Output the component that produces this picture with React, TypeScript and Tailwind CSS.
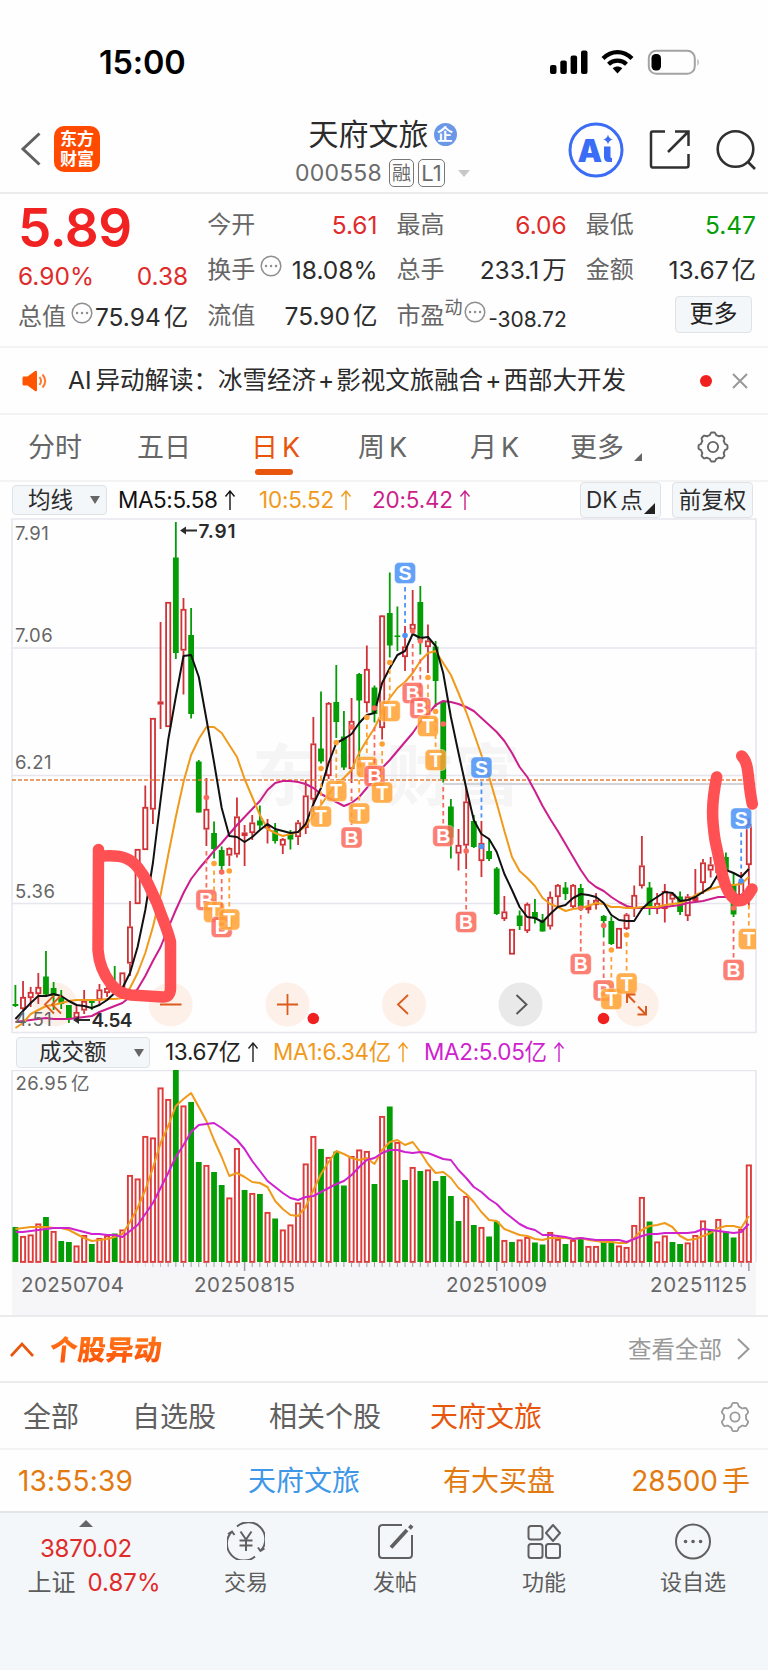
import type { ReactNode } from 'react';

// [rising, high, low, bodyTop, bodyBottom]
const candles: [number, number, number, number, number][] = [
  [0, 985, 1007, 1004, 1006], [1, 981, 1010, 997, 1009], [1, 987, 1007, 992, 998], [1, 973, 1004, 987, 994],
  [0, 951, 997, 976.5, 994.5], [0, 982, 1010, 988, 996], [0, 990, 1009, 998, 1004], [0, 1005, 1023, 1005, 1018],
  [1, 1006, 1018.5, 1012, 1018], [1, 990, 1014, 1001, 1010.5], [0, 999, 1010, 1001, 1003], [1, 984, 1006, 989.5, 1000],
  [1, 980, 997, 988, 993], [0, 966, 993, 983, 988], [1, 972.5, 993, 972.5, 988.5], [1, 901, 976, 926.5, 963.5],
  [1, 849, 904, 849, 904], [1, 785.5, 850, 807, 850], [1, 718, 824, 718, 809.5], [1, 622, 729, 701.5, 704.5],
  [1, 602, 727, 602, 727], [0, 522, 659, 557.5, 653], [1, 598, 694.5, 609, 650.5], [0, 608, 718.5, 635, 714],
  [0, 760, 812.5, 761.5, 812.5], [1, 778, 846, 809, 829.5], [0, 821.5, 858.5, 833, 849], [0, 846.5, 870, 850, 866],
  [1, 847.5, 866, 848, 855.5], [1, 797.5, 857.5, 816.5, 854.5], [1, 825, 866, 832.5, 836], [1, 815, 840, 822.5, 833],
  [0, 805.5, 830, 820.5, 825.5], [1, 819, 843.5, 825.5, 828.5], [0, 823, 843.5, 830.5, 841], [1, 838, 854, 839, 845.5],
  [0, 830, 849.5, 834, 839.5], [1, 820, 845, 822.5, 837], [1, 780, 834, 795.5, 828], [1, 717, 812, 743.5, 799.5],
  [0, 691.5, 763.5, 748.5, 761.5], [1, 702, 779, 703, 776], [0, 665, 738, 702, 722], [0, 711, 770, 736.5, 767.5],
  [1, 698, 783, 721, 769], [0, 673, 760, 674, 700.5], [1, 645.5, 712.5, 669, 703], [0, 685.5, 722.5, 687.5, 714],
  [1, 615, 739.5, 615.5, 728], [0, 572.5, 657.5, 613, 645.5], [0, 606.5, 651, 635.5, 637], [1, 626, 671, 646.5, 657],
  [1, 590, 635, 624, 629.5], [0, 586, 654.5, 602, 640], [1, 624.5, 673, 640.5, 647], [0, 641, 707, 646.5, 681],
  [0, 701.5, 782.5, 702, 779], [0, 799, 858.5, 806.5, 837.5], [1, 829, 870.5, 845, 853.5], [1, 787, 869, 801.5, 845.5],
  [0, 815, 848, 821, 847], [1, 821, 877, 843, 861], [0, 839, 861, 851, 859], [0, 867, 915, 868.5, 914],
  [1, 896, 921, 911.5, 919], [1, 929, 954.5, 929, 954.5], [0, 910.5, 930, 915.5, 926], [1, 902.5, 933, 904, 931],
  [0, 899, 923.5, 912, 918], [0, 914, 931.5, 920.5, 931.5], [1, 891.5, 929.5, 897, 926.5], [1, 884, 907.5, 885, 897],
  [0, 882, 900, 887.5, 894], [1, 884, 908.5, 885, 907], [0, 884, 911, 888, 908], [1, 900, 913.5, 906, 910],
  [1, 893, 909.5, 900, 905], [0, 915, 937.5, 916, 921], [0, 916.5, 945, 921, 944], [1, 928, 948.5, 928, 948.5],
  [1, 913, 930, 914.5, 929], [1, 885.5, 917, 895, 909], [1, 836, 888.5, 865.5, 886], [0, 882, 915, 887.5, 907],
  [1, 893, 914, 903, 909], [1, 884, 922.5, 891, 909], [1, 892, 903.5, 894, 899.5], [0, 891.5, 915, 896.5, 912],
  [1, 894, 921, 896.5, 916], [1, 869, 902, 897, 901], [1, 859, 894, 862.5, 883], [1, 857, 877.5, 864.5, 870.5],
  [1, 862, 880, 868, 873], [0, 852.5, 880, 857, 872], [0, 873, 917, 885, 914.5], [1, 872, 897, 882, 896],
  [1, 818, 907, 824, 865],
];

const ma5 = [1019, 1011, 1003, 996, 996, 994, 996, 1001, 1005, 1006, 1008, 1005, 1000, 993, 988, 973, 947, 910, 863, 800, 740, 697, 656, 655, 677, 719, 762, 808, 836, 837, 842, 837, 830, 824, 829, 831, 833, 832, 824, 804, 788, 763, 743, 739, 734, 723, 715, 713, 683, 668, 655, 651, 634, 638, 637, 646, 673, 717, 753, 788, 820, 834, 839, 852, 874, 890, 907, 917, 918, 922, 914, 907, 905, 898, 894, 895, 897, 903, 915, 920, 921, 921, 909, 902, 897, 892, 893, 901, 900, 897, 892, 887, 874, 870, 873, 877, 869];
const ma10 = [1028, 1023, 1014, 1010, 1006, 1005, 1003, 1001, 1000, 1000, 1000, 1000, 999, 999, 998, 988, 973, 953, 927, 895, 855, 817, 782, 755, 739, 727, 727, 733, 745, 757, 779, 797, 815, 829, 833, 836, 834, 832, 826, 815, 805, 794, 784, 778, 770, 753, 740, 728, 712, 698, 688, 682, 673, 661, 653, 651, 663, 675, 693, 712, 733, 755, 777, 803, 831, 857, 871, 878, 886, 898, 904, 907, 911, 909, 908, 906, 903, 904, 907, 907, 908, 908, 907, 907, 907, 905, 904, 903, 900, 895, 892, 889, 887, 885, 885, 884, 877];
const ma20 = [1022, 1021, 1020, 1019, 1018, 1019, 1019, 1019, 1018, 1017, 1016, 1012, 1009, 1006, 1003, 997, 989, 976, 961, 947, 928, 910, 893, 879, 869, 860, 851, 843, 834, 825, 817, 809, 801, 790, 783, 781, 781, 782, 784, 788, 794, 798, 802, 806, 803, 797, 788, 778, 768, 760, 751, 742, 733, 722, 714, 705, 701, 702, 704, 707, 711, 718, 725, 732, 741, 753, 767, 777, 791, 806, 819, 831, 844, 857, 870, 881, 887, 891, 897, 902, 906, 908, 908, 908, 908, 907, 906, 905, 903, 902, 901, 899, 897, 897, 896, 895, 889];

// [rising, top]
const volumes: [number, number][] = [
  [0, 1227], [1, 1236], [1, 1234.5], [1, 1223.5], [0, 1217], [1, 1231], [0, 1241], [0, 1242], [1, 1245.5], [1, 1235],
  [0, 1244], [1, 1238], [1, 1235.5], [0, 1233.5], [1, 1229.5], [1, 1175], [1, 1178.5], [1, 1136], [1, 1137.5], [1, 1087.5],
  [1, 1099], [0, 1070], [1, 1105.5], [0, 1102], [0, 1162], [1, 1165], [0, 1172], [0, 1185], [1, 1197.5], [1, 1148],
  [0, 1190], [1, 1193], [0, 1194], [1, 1212], [0, 1218.5], [1, 1229.5], [1, 1224.5], [1, 1202.5], [1, 1163.5], [1, 1136],
  [0, 1149], [1, 1157], [0, 1151.5], [0, 1185.5], [1, 1156], [1, 1149.5], [1, 1151], [0, 1184], [1, 1116], [0, 1106.5],
  [1, 1142], [0, 1180], [1, 1167], [0, 1171], [1, 1169.5], [0, 1181], [0, 1176], [0, 1196], [0, 1221], [1, 1196],
  [0, 1225], [1, 1227], [0, 1236.5], [0, 1221.5], [1, 1240], [0, 1242], [1, 1239.5], [1, 1237], [0, 1242.5], [0, 1244.5],
  [1, 1232], [1, 1239], [0, 1244], [1, 1240], [0, 1237.5], [1, 1246], [1, 1246], [0, 1241.5], [0, 1241.5], [1, 1245.5],
  [1, 1247], [1, 1225], [1, 1197], [0, 1221.5], [1, 1241.5], [1, 1235.5], [0, 1242], [0, 1244], [1, 1242.5], [1, 1235],
  [1, 1220.5], [0, 1229.5], [1, 1219], [0, 1231.5], [0, 1237.5], [1, 1229], [1, 1164.5],
];
const volMa1 = [1229, 1228, 1227, 1227, 1227, 1228, 1228, 1230, 1234, 1238, 1241, 1240, 1239, 1237, 1234, 1222, 1208, 1190, 1168, 1143, 1126, 1106, 1099, 1093, 1107, 1121, 1140, 1157, 1176, 1173, 1177, 1182, 1183, 1187, 1201, 1209, 1215, 1216, 1207, 1190, 1174, 1162, 1151, 1154, 1158, 1160, 1158, 1164, 1150, 1142, 1140, 1145, 1142, 1152, 1164, 1173, 1172, 1178, 1188, 1194, 1202, 1212, 1220, 1221, 1229, 1232, 1235, 1236, 1239, 1240, 1238, 1238, 1238, 1239, 1238, 1240, 1241, 1242, 1242, 1243, 1243, 1238, 1230, 1226, 1225, 1223, 1227, 1236, 1240, 1239, 1236, 1233, 1228, 1226, 1226, 1228, 1216];
const volMa2 = [1232, 1232, 1231, 1230, 1229, 1228, 1228, 1228, 1230, 1232, 1234, 1234, 1235, 1235, 1237, 1231, 1225, 1214, 1203, 1188, 1173, 1157, 1145, 1132, 1125, 1124, 1123, 1128, 1134, 1140, 1149, 1161, 1171, 1181, 1187, 1193, 1198, 1200, 1197, 1196, 1192, 1188, 1184, 1181, 1175, 1167, 1160, 1158, 1153, 1150, 1150, 1152, 1153, 1152, 1153, 1156, 1159, 1160, 1170, 1178, 1187, 1192, 1199, 1204, 1212, 1218, 1224, 1228, 1230, 1235, 1235, 1236, 1237, 1239, 1238, 1239, 1240, 1240, 1240, 1240, 1242, 1239, 1236, 1234, 1234, 1233, 1233, 1233, 1233, 1232, 1229, 1230, 1231, 1232, 1233, 1232, 1224];

// [label, candle index, badge y, anchor y]
const markers: [string, number, number, number][] = [
  ['B', 25, 900, 797.5], ['T', 26, 912, 863.5], ['B', 27, 927, 872], ['T', 28, 919.5, 871],
  ['T', 40, 816.5, 768.5], ['T', 42, 791, 742.5], ['B', 44, 837.5, 727], ['T', 45, 813.5, 765],
  ['T', 46, 767, 717.5], ['B', 47, 776, 708], ['T', 48, 792.5, 744], ['T', 49, 711, 662.5],
  ['S', 51, 573, 635.5], ['B', 52, 693, 631], ['B', 53, 708, 641], ['T', 54, 726, 677.5],
  ['T', 55, 760, 711.5], ['B', 56, 836, 724], ['B', 59, 922, 851], ['S', 61, 767.5, 846.5],
  ['B', 74, 964, 908], ['B', 77, 990.5, 925.5], ['T', 78, 999, 950], ['T', 80, 983.5, 935],
  ['B', 94, 970, 908], ['T', 96, 939, 890], ['S', 95, 818.5, 881],
];
const markerColors: Record<string, string> = { B: '#fa6a5c', T: '#ffa233', S: '#4b93f7' };

const GREEN = '#059d05';
const RED = '#cf3338';
const px = (i: number) => 15.4 + i * 7.64;
const line = (ys: number[]) => ys.map((y, i) => `${px(i).toFixed(1)},${y}`).join(' ');

function Gear({ lobes, size, depth, hole }: { lobes: number; size: number; depth: number; hole: number }) {
  const pts = Array.from({ length: 120 }, (_, k) => {
    const a = (k / 120) * Math.PI * 2;
    const wave = Math.max(-0.7, Math.min(0.7, Math.cos(a * lobes) * 1.4));
    const r = 12.6 + depth * wave;
    return `${(16 + r * Math.sin(a)).toFixed(2)},${(16 - r * Math.cos(a)).toFixed(2)}`;
  });
  return (
    <svg width={size} height={size} viewBox="0 0 32 32" fill="none" stroke="currentColor" strokeWidth="1.8" strokeLinejoin="round">
      <polygon points={pts.join(' ')} />
      <circle cx="16" cy="16" r={hole} />
    </svg>
  );
}

function More() {
  return (
    <svg className="shrink-0 text-[#8f8f8f]" width="22" height="22" viewBox="0 0 22 22" fill="none" stroke="currentColor" strokeWidth="1.5">
      <circle cx="11" cy="11" r="9.8" />
      <path d="M6 11h.1M11 11h.1M16 11h.1" strokeWidth="2.4" strokeLinecap="round" />
    </svg>
  );
}

function Stat({ label, value, unit, color = 'text-[#2c2c2c]', children }: { label: string; value: string; unit?: string; color?: string; children?: ReactNode }) {
  return (
    <div className="flex h-[45.5px] items-center justify-between whitespace-nowrap">
      <span className="flex items-center text-[24px] text-[#666]">
        {label}
        {children}
      </span>
      <span className={`text-[24.5px] ${color}`}>
        {value}
        {unit && <span className="ml-[3px]">{unit}</span>}
      </span>
    </div>
  );
}

function KChart() {
  return (
    <svg className="block overflow-visible" width="768" height="515" viewBox="0 518 768 515" fontFamily="Inter, 'Noto Sans CJK SC', sans-serif">
      <defs>
        <clipPath id="plot">
          <rect x="12" y="518" width="744" height="515" />
        </clipPath>
      </defs>
      <text x="252" y="800" fontSize="67" fontWeight="700" fill="#f5f5f6">东方财富</text>
      <g stroke="#e6e6ee" strokeWidth="1.6">
        <path d="M12 648H756M12 775.5H756M12 903.5H756" />
        <path d="M12 519H756V1032.5H12Z" fill="none" />
      </g>
      <path d="M443 784H756" stroke="#d2d4da" strokeWidth="2" />
      {/* control button discs */}
      <g fill="#fdf0e8">
        <circle cx="55" cy="1004.5" r="22" />
        <circle cx="170.7" cy="1004.5" r="22" />
        <circle cx="287.5" cy="1004.5" r="22" />
        <circle cx="404" cy="1004.5" r="22" />
        <circle cx="636.7" cy="1004.5" r="22" />
      </g>
      <circle cx="520.5" cy="1004.5" r="22" fill="#e9e9e9" />
      <g clipPath="url(#plot)">
        {candles.map(([up, high, low, top, bottom], i) => {
          const x = px(i);
          return up ? (
            <g key={i} stroke={RED} strokeWidth="1.8" fill="#fff">
              <path d={`M${x} ${high}V${top}M${x} ${bottom}V${low}`} />
              <rect x={x - 2.1} y={top + 0.8} width="4.2" height={Math.max(1, bottom - top - 1.6)} fill={bottom - top < 5 ? RED : '#fff'} />
            </g>
          ) : (
            <g key={i} fill={GREEN}>
              <rect x={x - 0.9} y={high} width="1.8" height={low - high} />
              <rect x={x - 2.9} y={top} width="5.8" height={bottom - top} />
            </g>
          );
        })}
        <path d="M12 780H756" stroke="#e2813c" strokeWidth="1.6" strokeDasharray="4 2" />
        <g fill="none" strokeWidth="2" strokeLinejoin="round">
          <polyline points={line(ma20)} stroke="#cc1f8c" />
          <polyline points={line(ma10)} stroke="#f09a1c" />
          <polyline points={line(ma5)} stroke="#111" />
        </g>
        {markers.map(([label, i, y, anchor]) => {
          const x = px(i);
          const color = markerColors[label];
          const down = y > anchor;
          return (
            <g key={`${label}${i}`} fill={color}>
              <path d={down ? `M${x} ${Math.max(anchor + 7, y - 49)}V${y - 12}` : `M${x} ${y + 14}V${Math.min(anchor - 6, y + 50)}`} stroke={color} strokeWidth="1.8" strokeDasharray="4.5 3.5" />
              <circle cx={x} cy={anchor} r="2.8" />
              <rect x={x - 10.5} y={y - 10.5} width="21" height="21" rx="4.5" fillOpacity="0.86" stroke="#fff" strokeOpacity="0.5" strokeWidth="0.8" />
              <text x={x} y={y + 7} fontFamily="Liberation Sans, sans-serif" fontSize="19.5" fontWeight="700" fill="#fff" textAnchor="middle">{label}</text>
            </g>
          );
        })}
      </g>

      <g fontSize="18.5" letterSpacing="0.5" fill="#666">
        <text x="15" y="539.5">7.91</text>
        <text x="15" y="641.5">7.06</text>
        <text x="15" y="769">6.21</text>
        <text x="15" y="897.5">5.36</text>
        <text x="15" y="1025.5">4.51</text>
      </g>
      <g fontSize="19" fontWeight="600" fill="#2b2b2b">
        <text x="198.5" y="537.5" textLength="37">7.91</text>
        <text x="91.5" y="1027" textLength="41">4.54</text>
        <path d="M180 530.5l6-4v3h11v2h-11v3zM73 1020l6-4v3h11v2h-11v3z" />
      </g>

      <g fill="none" stroke="#dc5a1c" strokeWidth="1.8">
        <path d="M54 995.5l-9 9 9 9M61 995.5l-9 9 9 9" />
        <path d="M160 1004.5h21.5M277 1004.5h21M287.5 994v21M408 995l-10 9.5 10 9.5" />
        <path d="M635 1002.5l-8-8M627 1003v-8.5h8.5M638 1006.5l8 8M646 1006v8.5h-8.5" strokeWidth="2" />
      </g>
      <path d="M516.5 995l10 9.5-10 9.5" fill="none" stroke="#555" strokeWidth="1.9" />
      <circle cx="313.3" cy="1018.5" r="5.8" fill="#f02020" />
      <circle cx="603.5" cy="1018.5" r="5.8" fill="#f02020" />

      {/* hand-drawn strokes */}
      <g fill="none" stroke="#ff5053" strokeWidth="11.5" strokeLinecap="round" strokeLinejoin="round">
        <path d="M98.500 849.500L98 950C99 965 104 975 111 984C117 991 122 994 131 995L163 997C168 997 170.500 994 170.500 988V942C168 930 162 918 157 903C151 891 147 879 141 872C133 859 124 855 104 856" />
        <path d="M716.700 777C711 805 712 820 715 840L722 873C725 887 730 897 737 900.500C745 902 749 894 752 889" />
        <path d="M741.700 756C750 764 747 779 752.300 804" />
      </g>
    </svg>
  );
}

function VolumeChart() {
  return (
    <svg className="block" width="768" height="245" viewBox="0 1070 768 245" fontFamily="Inter, 'Noto Sans CJK SC', sans-serif">
      <rect x="12" y="1262" width="744" height="53" fill="#f6f6f9" />
      <path d="M12 1262V1070.5H756V1262" fill="none" stroke="#e6e6ee" strokeWidth="1.6" />
      <text x="15.5" y="1089.5" fontSize="18.5" letterSpacing="0.5" fill="#666">26.95<tspan dx="3">亿</tspan></text>
      {volumes.map(([up, top], i) =>
        up ? (
          <rect key={i} x={px(i) - 2.1} y={top + 0.9} width="4.2" height={1261 - top} fill="#fff" stroke="#de3b3b" strokeWidth="1.9" />
        ) : (
          <rect key={i} x={px(i) - 2.9} y={top} width="5.8" height={1262 - top} fill={GREEN} />
        ),
      )}
      {volumes.map((_, i) =>
        i > 15 ? <path key={i} d={`M${px(i)} 1262v${i === 30 || i === 63 || i === 96 ? 9 : 5}`} stroke="#9c9ca2" strokeWidth={i === 30 || i === 63 || i === 96 ? 1.5 : 1} strokeOpacity={Math.min(1, (i - 15) / 6)} /> : null,
      )}
      <g fill="none" strokeWidth="2" strokeLinejoin="round">
        <polyline points={line(volMa1)} stroke="#f09a1c" />
        <polyline points={line(volMa2)} stroke="#cf22cf" />
      </g>
      <g fontSize="20.5" fill="#666">
        <text x="21" y="1292" textLength="103">20250704</text>
        <text x="194" y="1292" textLength="101">20250815</text>
        <text x="446" y="1292" textLength="101">20251009</text>
        <text x="650" y="1292" textLength="97">20251125</text>
      </g>
    </svg>
  );
}

export default function App() {
  return (
    <div className="h-[1670px] w-[768px] overflow-hidden bg-[#fefefe] font-[Inter,'Noto_Sans_CJK_SC',sans-serif] leading-none text-[#2c2c2c]">
      {/* Status bar */}
      <div className="flex h-[98px] items-center justify-between pt-[28px] pr-[68px] pl-[99px]">
        <span className="text-[32.5px] font-semibold tracking-[-0.2px] text-black">15:00</span>
        <svg width="150" height="28" viewBox="0 0 150 28">
          <rect x="0" y="16" width="6.5" height="9" rx="2" />
          <rect x="10.3" y="11.5" width="6.5" height="13.5" rx="2" />
          <rect x="20.6" y="6.5" width="6.5" height="18.5" rx="2" />
          <rect x="31" y="1.5" width="6.5" height="23.5" rx="2" />
          <g fill="none" stroke="#000" strokeWidth="4.2">
            <path d="M53 9.500C61.500 1 73.500 1 82 9.500" />
            <path d="M58.500 15.200C63.500 10.500 71.500 10.500 76.500 15.200" />
          </g>
          <path d="M62.700 19.300C65.500 17 69.500 17 72.300 19.300L67.500 24.500Z" />
          <rect x="98.8" y="1.8" width="46" height="23" rx="7.5" fill="none" stroke="#a3a3a3" strokeWidth="2" />
          <rect x="101.5" y="5" width="9.5" height="16.5" rx="4.2" />
          <path d="M147.500 9.500q2.500 3.500 0 7.500z" fill="#a3a3a3" />
        </svg>
      </div>

      {/* Header */}
      <div className="flex h-[96px] items-center justify-between border-b-2 border-[#ececec] pr-[11px] pl-[20px]">
        <div className="flex w-[243px] items-center gap-[12px] pt-[8px]">
          <svg width="22" height="34" viewBox="0 0 22 34" fill="none" stroke="#606060" strokeWidth="3">
            <path d="M19.500 1.500L3 17l16.500 15.500" />
          </svg>
          <div className="flex h-[46px] w-[46px] flex-col items-center justify-center gap-[1px] rounded-[10px] bg-[#ff4a00] text-[17px] font-bold leading-[19px] text-white">
            <span>东方</span>
            <span>财富</span>
          </div>
        </div>
        <div className="-ml-[12px] flex w-[220px] flex-col items-center pt-[16px]">
          <div className="flex h-[40px] items-center">
            <span className="text-[30px] text-[#2b2b2b]">天府文旅</span>
            <span className="ml-[5px] flex h-[23px] w-[23px] items-center justify-center rounded-full bg-[#6a97e6] text-[16px] font-bold text-white">企</span>
          </div>
          <div className="flex h-[38px] items-center text-[23px] text-[#6b6b6b]">
            <span className="tracking-[0.2px]">000558</span>
            <span className="ml-[7px] flex h-[28px] w-[25px] items-center justify-center rounded-[5px] border-[1.5px] border-[#777] text-[19px]">融</span>
            <span className="ml-[4px] flex h-[28px] w-[27px] items-center justify-center rounded-[5px] border-[1.5px] border-[#777] text-[22px]">L1</span>
            <span className="ml-[13px] h-0 w-0 border-x-[6.5px] border-t-[7px] border-x-transparent border-t-[#c8c8c8]" />
          </div>
        </div>
        <div className="flex w-[243px] items-center justify-end pt-[9px]">
          <svg width="56" height="56" viewBox="0 0 56 56">
            <circle cx="28" cy="28" r="26" fill="none" stroke="#3a6cf6" strokeWidth="3" />
            <text x="9.5" y="39.5" fontFamily="Inter, sans-serif" fontSize="31" fontWeight="900" fill="#3a6cf6">A</text>
            <path d="M36 24.500h6.500v10.500q0 1 1.500 1v4h-3q-5 0-5-5z" fill="#3a6cf6" />
            <path d="M40 12.500q.8 4.200 5 5q-4.200.8-5 5q-.8-4.200-5-5q4.200-.8 5-5z" fill="#3a6cf6" />
          </svg>
          <svg className="ml-[25px]" width="42" height="42" viewBox="0 0 42 42" fill="none" stroke="#303030" strokeWidth="2.5">
            <path d="M16 2.500H3.500q-1.500 0-1.500 1.500V36q0 2.500 1.500 2.500H37q2.500 0 2.500-2V25M26 2.500H39.500V17M39 3L19 23" />
          </svg>
          <svg className="ml-[24px]" width="42" height="42" viewBox="0 0 42 42" fill="none" stroke="#303030" strokeWidth="2.6">
            <circle cx="20.5" cy="20" r="17.8" />
            <path d="M32.500 32.500l7.500 7.500" />
          </svg>
        </div>
      </div>

      {/* Quote */}
      <div className="grid h-[154px] grid-cols-4 gap-x-[19px] border-b-2 border-[#f3f3f3] pr-[12px] pl-[18px] pt-[8px]">
        <div>
          <div className="flex h-[53px] items-center text-[53px] font-semibold tracking-[-0.4px] text-[#f02222]">5.89</div>
          <div className="flex h-[43px] items-center justify-between text-[24.5px] text-[#e02b2b]">
            <span>6.90%</span>
            <span>0.38</span>
          </div>
          <div className="-mt-[4px]">
            <Stat label="总值" value="75.94" unit="亿"><span className="-mr-4 mb-[8px] ml-[5px]"><More /></span></Stat>
          </div>
        </div>
        <div>
          <Stat label="今开" value="5.61" color="text-[#e02b2b]" />
          <Stat label="换手" value="18.08%"><span className="-mr-4 mb-[8px] ml-[5px]"><More /></span></Stat>
          <Stat label="流值" value="75.90" unit="亿" />
        </div>
        <div>
          <Stat label="最高" value="6.06" color="text-[#e02b2b]" />
          <Stat label="总手" value="233.1" unit="万" />
          <div className="flex h-[46px] items-center whitespace-nowrap text-[24px] text-[#666]">
            <span>市盈</span>
            <span className="mb-[16px] text-[18px]">动</span>
            <span className="mb-[8px] ml-[1px]"><More /></span>
            <span className="mt-[6px] ml-auto text-[21px] text-[#2c2c2c]">-308.72</span>
          </div>
        </div>
        <div>
          <Stat label="最低" value="5.47" color="text-[#059d05]" />
          <Stat label="金额" value="13.67" unit="亿" />
          <div className="flex h-[42px] items-center justify-end pr-[4px]">
            <button className="h-[37px] w-[77px] rounded-[4px] border-[1.5px] border-[#dfe3e6] bg-[#f4f7f9] text-[24px] text-[#222]">更多</button>
          </div>
        </div>
      </div>

      {/* News strip */}
      <div className="flex h-[67px] items-center border-b-2 border-[#f3f3f3] pr-[20px] pl-[22px]">
        <svg width="26" height="22" viewBox="0 0 26 22" fill="#ff5500">
          <path d="M1 6.500h4.500L13 1q2-1 2 1v18q0 2-2 1L5.500 15.500H2q-1.500 0-1.500-1.500V8z" />
          <path d="M17.500 7q3 4 0 8M20.500 4.500q5.500 6.500 0 13" fill="none" stroke="#ff7a2e" strokeWidth="2" />
        </svg>
        <span className="ml-[20px] whitespace-nowrap text-[24.500px] text-[#2b2b2b]">AI<span className="ml-[4px]">异动解读：</span>冰雪经济<span className="mx-[2px]">+</span>影视文旅融合<span className="mx-[2px]">+</span>西部大开发</span>
        <span className="ml-auto h-[12px] w-[12px] rounded-full bg-[#f02020]" />
        <svg className="ml-[20px]" width="16" height="16" viewBox="0 0 16 16" stroke="#999" strokeWidth="2">
          <path d="M1 1l14 14M15 1L1 15" />
        </svg>
      </div>

      {/* Period tabs */}
      <div className="flex h-[67px] border-b-2 border-[#f3f3f3] pl-[28px] text-[27px] leading-[66px] whitespace-nowrap text-[#666]">
        <span className="w-[109px]">分时</span>
        <span className="w-[114px]">五日</span>
        <span className="relative w-[107px] text-[#e8550c]">
          日<span className="ml-[4px]">K</span>
          <span className="absolute bottom-[5px] left-[4px] h-[6px] w-[38px] rounded-full bg-[#e8550c]" />
        </span>
        <span className="w-[112px]">周<span className="ml-[4px]">K</span></span>
        <span className="w-[100px]">月<span className="ml-[4px]">K</span></span>
        <span className="flex w-[126px]">更多<span className="mt-[38px] ml-[10px] h-0 w-0 border-b-[8px] border-l-[8px] border-b-[#666] border-l-transparent" /></span>
        <span className="-mt-[2px] flex items-center"><Gear lobes={8} size={34} depth={1.5} hole={4.8} /></span>
      </div>

      {/* Moving averages */}
      <div className="flex h-[36px] items-center pr-[15px] pl-[12px] text-[22.500px] whitespace-nowrap">
        <span className="flex h-[30px] w-[95px] items-center rounded-[4px] border-[1.5px] border-[#dfe3e6] bg-[#f4f7f9] pl-[15px]">
          均线
          <span className="ml-[17px] h-0 w-0 border-x-[5px] border-t-[8px] border-x-transparent border-t-[#666]" />
        </span>
        <span className="ml-[11px] w-[141px] tracking-[-0.4px] text-[#111]">MA5:5.58<Arrow /></span>
        <span className="w-[113px] tracking-[-0.2px] text-[#f09a1c]">10:5.52<Arrow /></span>
        <span className="tracking-[-0.2px] text-[#cc1f8c]">20:5.42<Arrow /></span>
        <span className="relative ml-auto flex h-[36px] w-[81px] items-center rounded-[4px] border-[1.5px] border-[#dfe3e6] bg-[#f4f7f9] pl-[5px]">
          DK<span className="ml-[3px]">点</span>
          <span className="absolute right-[5px] bottom-[3px] h-0 w-0 border-b-[11px] border-l-[11px] border-b-[#222] border-l-transparent" />
        </span>
        <span className="ml-[11px] flex h-[36px] w-[81px] items-center justify-center rounded-[4px] border-[1.5px] border-[#dfe3e6] bg-[#f4f7f9]">前复权</span>
      </div>

      <KChart />

      {/* Turnover */}
      <div className="flex h-[37px] items-center pt-[2px] pl-[16px] text-[22.500px] whitespace-nowrap">
        <span className="flex h-[31px] w-[134px] items-center rounded-[4px] border-[1.5px] border-[#dfe3e6] bg-[#f4f7f9] pl-[22px]">
          成交额
          <span className="ml-[27px] h-0 w-0 border-x-[5px] border-t-[8px] border-x-transparent border-t-[#666]" />
        </span>
        <span className="ml-[15px] w-[108px] tracking-[-0.3px] text-[#222]">13.67亿<Arrow /></span>
        <span className="w-[151px] tracking-[-0.3px] text-[#f09a1c]">MA1:6.34亿<Arrow /></span>
        <span className="tracking-[-0.3px] text-[#cf22cf]">MA2:5.05亿<Arrow /></span>
      </div>

      <VolumeChart />

      {/* Stock moves */}
      <div className="flex h-[68px] items-center border-y-2 border-[#ebebed] pr-[18px] pl-[10px]">
        <svg width="24" height="15" viewBox="0 0 24 15" fill="none" stroke="#e8550c" strokeWidth="2.6">
          <path d="M1 14L12 2l11 12" />
        </svg>
        <span className="ml-[16px] -skew-x-6 bg-gradient-to-b from-[#ff7a1a] to-[#fb4f06] bg-clip-text pt-[2px] text-[28px] font-black leading-[32px] text-transparent">个股异动</span>
        <span className="ml-auto pt-[2px] text-[23.500px] text-[#999]">查看全部</span>
        <svg className="ml-[15px]" width="13" height="22" viewBox="0 0 13 22" fill="none" stroke="#999" strokeWidth="2">
          <path d="M1 1l10.500 10L1 21" />
        </svg>
      </div>
      <div className="flex h-[67px] items-center border-b-2 border-[#f3f3f3] pt-[2px] pr-[17px] pl-[23px] text-[28px] whitespace-nowrap text-[#606060]">
        <span className="w-[109px]">全部</span>
        <span className="w-[137px]">自选股</span>
        <span className="w-[161px]">相关个股</span>
        <span className="text-[#e8550c]">天府文旅</span>
        <span className="ml-auto text-[#999]"><Gear lobes={6} size={32} depth={2.2} hole={4.6} /></span>
      </div>
      <div className="flex h-[63px] items-center border-b-2 border-[#e4e5e7] pr-[18px] pl-[18px] text-[28px] whitespace-nowrap text-[#e27a10]">
        <span className="w-[230px] tracking-[0.2px]">13:55:39</span>
        <span className="w-[195px] text-[#3f97e8]">天府文旅</span>
        <span>有大买盘</span>
        <span className="ml-auto">28500<span className="ml-[4px]">手</span></span>
      </div>

      {/* Bottom bar */}
      <div className="flex h-[157px] bg-[#f4f7f9] text-[24px] text-[#5c5c5c]">
        <div className="flex w-[172px] flex-col items-center pt-[7px] whitespace-nowrap">
          <span className="h-0 w-0 border-x-[7px] border-b-[7px] border-x-transparent border-b-[#666]" />
          <span className="mt-[10px] tracking-[-0.2px] text-[#e02b2b]">3870.02</span>
          <span className="mt-[10px] ml-[16px] flex">上证<span className="ml-[12px] text-[#e02b2b]">0.87%</span></span>
        </div>
        <Tab label="交易">
          <path d="M10 4.500A17 17 0 0 1 34 28.500M28 34.500A17 17 0 0 1 4.500 10M1 12l4-2.500L7.500 13M31 25.500l2.500 3.500 4-2.500" />
          <path d="M13.500 9.500l5.500 8 5.500-8M19 17.500V29M12.500 18.500h13M12.500 23.500h13" />
        </Tab>
        <Tab label="发帖">
          <path d="M26 3H6.500Q3 3 3 6.500V32.500Q3 36 6.500 36H32.500Q36 36 36 32.500V13" />
          <path d="M33.500 6.500L36 3.500M15 25.500L31 8" strokeWidth="3.8" />
        </Tab>
        <Tab label="功能">
          <rect x="3.5" y="4" width="14" height="13.5" rx="2.5" />
          <rect x="3.5" y="22" width="14" height="14" rx="2.5" />
          <rect x="21" y="22" width="14" height="14" rx="2.5" />
          <path d="M28 3l7 8-7 8-7-8z" strokeLinejoin="round" />
        </Tab>
        <Tab label="设自选">
          <circle cx="19" cy="19.5" r="17" />
          <path d="M11.500 19.500h.1M19 19.500h.1M26.500 19.500h.1" strokeWidth="3.6" strokeLinecap="round" />
        </Tab>
      </div>
    </div>
  );
}

function Arrow() {
  return (
    <svg className="ml-[6px] inline-block align-[-2px]" width="12" height="20" viewBox="0 0 12 20" fill="none" stroke="currentColor" strokeWidth="1.4">
      <path d="M6 20V1M1.500 6.500L6 1l4.500 5.500" />
    </svg>
  );
}

function Tab({ label, children }: { label: string; children: ReactNode }) {
  return (
    <div className="-ml-px flex w-[150px] flex-col items-center pt-[9px] text-[22px]">
      <svg width="38" height="38" viewBox="0 0 38 38" fill="none" stroke="#606060" strokeWidth="2">{children}</svg>
      <span className="mt-[11px]">{label}</span>
    </div>
  );
}
